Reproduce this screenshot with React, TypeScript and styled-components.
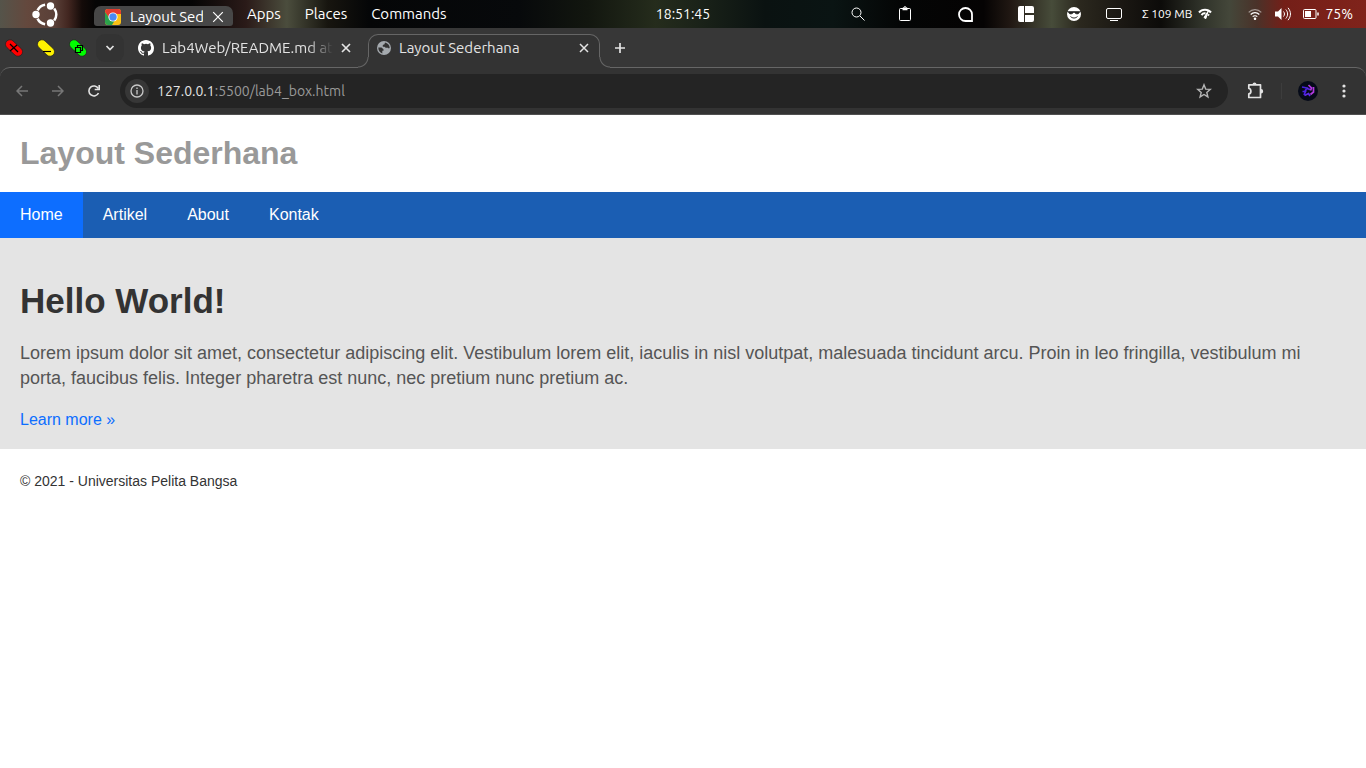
import React from 'react';
import styled, { createGlobalStyle } from 'styled-components';

const Global = createGlobalStyle`
  * { box-sizing: border-box; }
  body { margin: 0; background: #fff; font-family: "Liberation Sans", Arial, sans-serif; color: #333; }
  button { border: 0; padding: 0; background: none; color: inherit; font: inherit; display: flex; align-items: center; justify-content: center; cursor: pointer; }
  svg { display: block; flex: none; }
`;

const ui = '"Ubuntu", "Noto Sans", "Open Sans", sans-serif';

const Desktop = styled.header`
  display: grid;
  grid-template-columns: 1fr auto 1fr;
  align-items: center;
  height: 28px;
  color: #fff;
  font: 14px/20px ${ui};
  background: linear-gradient(90deg, #55544a 0%, #64483d 2%, #5a4038 4%, #422620 5%, #140b09 6%, #050505 7%, #050505 14%, #2a1a18 18%, #4b4d3d 21%, #17150f 24%, #050607 27%, #07090b 38%, #12160f 43%, #252c1c 48%, #1b2319 51%, #0a1211 56%, #0a1413 61%, #040505 66%, #050303 72%, #211813 74%, #474c3a 77%, #2b281e 79%, #1b1813 82%, #0c0b09 85%, #30332a 88%, #44473a 90%, #4a3229 92%, #741f18 94%, #80231b 100%);
`;
const DeskLeft = styled.div`
  display: flex;
  align-items: center;
  height: 28px;
  padding-left: 32px;
  font-size: 15px;
`;
const DeskButton = styled.button<{ $space: number }>`
  margin-left: ${p => p.$space}px;
`;
const TaskItem = styled.div`
  display: flex;
  align-items: center;
  align-self: flex-end;
  gap: 9px;
  width: 139px;
  height: 20px;
  margin: 0 14px 2px 35px;
  padding: 2px 9px 0 11px;
  border-radius: 7px 7px 3px 3px;
  background: #474747;
`;
const TaskName = styled.span`
  flex: 1;
  overflow: hidden;
  white-space: nowrap;
`;
const DeskMenu = styled.nav`
  display: flex;
  gap: 24px;
`;
const Status = styled.div`
  display: flex;
  align-items: center;
  justify-content: flex-end;
  padding-right: 13px;
`;
const Memory = styled.span`
  margin-left: 20px;
  font-size: 12px;
`;
const Percent = styled.span`
  margin-left: 6px;
`;

const Chrome = styled.section`
  background: #373737;
  color: #e3e3e3;
  font: 14px/20px ${ui};
`;
const TabStrip = styled.div`
  display: flex;
  height: 39px;
  font-size: 15px;
`;
const WindowButtons = styled.div`
  display: flex;
  align-items: center;
  gap: 12px;
  padding-left: 4px;
`;
const TabSearch = styled.button`
  align-self: center;
  width: 28px;
  height: 28px;
  margin-left: 8px;
  && { border-radius: 9px; background: #333; }
`;
const Tab = styled.div<{ $active?: boolean }>`
  position: relative;
  display: flex;
  align-items: center;
  gap: 8px;
  width: ${p => (p.$active ? 232 : 244)}px;
  height: ${p => (p.$active ? 34 : 28)}px;
  margin-top: 6px;
  padding: ${p => (p.$active ? '0 10px 7px 8px' : '0 17px 0 14px')};
  ${p => p.$active && `
    border: solid #666;
    border-width: 1px 1px 0;
    border-radius: 10px 10px 0 0;
    background: #333;
    &::before, &::after {
      content: '';
      position: absolute;
      bottom: 0;
      width: 11px;
      height: 11px;
    }
    &::before { left: -11px; background: radial-gradient(circle at 0 0, #373737 9px, #666 10px, #333 11px); }
    &::after { right: -11px; background: radial-gradient(circle at 100% 0, #373737 9px, #666 10px, #333 11px); }
  `}
`;
const TabTitle = styled.span<{ $fade?: boolean }>`
  flex: 1;
  overflow: hidden;
  white-space: nowrap;
  ${p => p.$fade && 'mask-image: linear-gradient(90deg, #000 85%, transparent);'}
`;
const NewTab = styled.button`
  align-self: center;
  width: 28px;
  height: 28px;
  margin-left: 6px;
`;
const Toolbar = styled.div`
  display: flex;
  align-items: center;
  height: 48px;
  padding: 0 14px 2px;
  border: solid #666;
  border-width: 1px 0 0;
  border-radius: 10px 10px 0 0;
  background: #333;
  box-shadow: inset 0 -1px #505050;
`;
const ToolButton = styled.button<{ $space?: number; $dim?: boolean }>`
  width: 16px;
  height: 28px;
  margin-left: ${p => p.$space || 0}px;
  && { color: ${p => (p.$dim ? '#777' : '#e3e3e3')}; }
`;
const AddressBar = styled.div`
  display: flex;
  align-items: center;
  flex: 1;
  height: 34px;
  margin-left: 18px;
  padding: 0 16px 0 5px;
  border-radius: 17px;
  background: #242424;
`;
const SiteInfo = styled.button`
  width: 24px;
  height: 24px;
  margin-right: 8px;
  && { border-radius: 12px; background: #373737; }
`;
const Address = styled.label`
  display: flex;
  flex: 1;
`;
const AddressInput = styled.input`
  flex: 1;
  min-width: 0;
  padding: 0;
  border: 0;
  outline: 0;
  background: none;
  color: #9a9a9a;
  font: inherit;
`;
const Divider = styled.span`
  width: 1px;
  height: 16px;
  margin: 0 16px 0 18px;
  background: #3d3d3d;
`;

const SiteHeader = styled.header`
  padding: 20px;
  h1 { margin: 0; font-size: 32px; line-height: 37px; color: #999; }
`;
const SiteNav = styled.nav`
  display: flex;
  background: #1b5eb3;
`;
const NavLink = styled.a<{ $active?: boolean }>`
  padding: 14px 20px;
  font-size: 16px;
  line-height: 18px;
  color: #fff;
  text-decoration: none;
  background: ${p => (p.$active ? '#0d6eff' : 'transparent')};
`;
const Hero = styled.section`
  padding: 43px 20px 20px;
  background: #e4e4e4;
  h1 { margin: 0 0 20px; font-size: 35px; line-height: 40px; }
  p { margin: 0 0 20px; font-size: 18px; line-height: 25px; color: #555; }
  a { display: inline-block; font-size: 16px; line-height: 18px; color: #0d6eff; text-decoration: none; vertical-align: top; }
`;
const SiteFooter = styled.footer`
  padding: 24px 20px;
  font-size: 14px;
  line-height: 16px;
`;

const line = { fill: 'none', stroke: 'currentColor' };

const UbuntuLogo = () => (
  <svg width="27" height="27" viewBox="0 0 27 27" fill="#fff">
    <path d="M22.200 7.500a9.800 9.800 0 0 1 0 12M5.600 9.400a9.800 9.800 0 0 1 7.500-5.600M5.600 17.600a9.800 9.800 0 0 0 7.500 5.600" fill="none" stroke="#fff" strokeWidth="2.600" />
    <circle cx="4" cy="13.500" r="3.700" /><circle cx="18.500" cy="5" r="3.700" /><circle cx="18.500" cy="22" r="3.700" />
  </svg>
);
const ChromeLogo = () => (
  <svg width="16" height="16" viewBox="0 0 16 16">
    <rect width="16" height="16" rx="3" fill="#fbc116" />
    <path d="M0 3a3 3 0 0 1 3-3h10a3 3 0 0 1 3 3v2H8L4.500 10 0 3z" fill="#e33b2e" />
    <path d="M0 3l5 7 5 1-3 5H3a3 3 0 0 1-3-3z" fill="#2ba24c" />
    <circle cx="8" cy="8" r="4.600" fill="#fff" /><circle cx="8" cy="8" r="3.700" fill="#4a8af4" />
  </svg>
);
const Cross = ({ size, stroke }: { size: number; stroke: number }) => (
  <svg width={size} height={size} viewBox="0 0 10 10" {...line} strokeWidth={stroke}><path d="M1 1l8 8M9 1L1 9" /></svg>
);
const Pill = ({ color, children }: { color: string; children: React.ReactNode }) => (
  <svg width="20" height="20" viewBox="0 0 20 20">
    <rect x="0" y="5.500" width="20" height="9" rx="4.500" fill={color} stroke="#222" strokeWidth=".7" transform="rotate(43 10 10)" />
    <g fill="none" stroke="#000" strokeWidth="1.200">{children}</g>
  </svg>
);
const GitHub = () => (
  <svg width="16" height="16" viewBox="0 0 16 16" fill="#fff">
    <path d="M8 0C3.580 0 0 3.580 0 8c0 3.540 2.290 6.530 5.470 7.590.4.070.55-.17.55-.38 0-.19-.01-.82-.01-1.490-2.010.37-2.530-.49-2.690-.94-.09-.23-.48-.94-.82-1.130-.28-.15-.68-.52-.01-.53.63-.01 1.080.58 1.230.82.72 1.210 1.870.87 2.330.66.07-.52.28-.87.51-1.070-1.780-.2-3.640-.89-3.640-3.950 0-.87.31-1.590.82-2.150-.08-.2-.36-1.020.08-2.120 0 0 .67-.21 2.200.82a7.600 7.600 0 0 1 4 0c1.530-1.040 2.200-.82 2.200-.82.44 1.100.16 1.920.08 2.120.51.56.82 1.270.82 2.150 0 3.070-1.870 3.750-3.650 3.950.29.25.54.73.54 1.480 0 1.070-.01 1.930-.01 2.200 0 .21.15.46.55.38A8 8 0 0 0 16 8c0-4.420-3.580-8-8-8z" />
  </svg>
);
const Globe = () => (
  <svg width="14" height="14" viewBox="0 0 14 14">
    <circle cx="7" cy="7" r="7" fill="#a4a9ae" />
    <path d="M1.300 6.500h3.200l2 1.700v1.600H5.300v2.700C2.800 11.600 1.200 9.300 1.300 6.500zM8 1.500c2.600.5 4.500 2.600 4.700 5-.4 1.300-1.200 1.400-1.600.3H8.700L7.500 5.700H5.800V4l1.700-.8z" fill="#333" />
  </svg>
);

export default function App() {
  return (
    <>
      <Global />
      <Desktop>
        <DeskLeft>
          <DeskButton $space={0} aria-label="Activities"><UbuntuLogo /></DeskButton>
          <TaskItem><ChromeLogo /><TaskName>Layout Sed</TaskName><button aria-label="Close window"><Cross size={12} stroke={1} /></button></TaskItem>
          <DeskMenu><button>Apps</button><button>Places</button><button>Commands</button></DeskMenu>
        </DeskLeft>
        <time>18:51:45</time>
        <Status>
          <DeskButton $space={0} aria-label="Search"><svg width="14" height="14" viewBox="0 0 14 14" {...line}><circle cx="5.500" cy="5.500" r="4.500" /><path d="M9 9l4.500 4.500" /></svg></DeskButton>
          <DeskButton $space={34} aria-label="Clipboard"><svg width="12" height="16" viewBox="0 0 12 16" {...line}><rect x=".5" y="2.500" width="11" height="12" rx="1" /><path d="M3.500 3h5" strokeWidth="2.500" /><circle cx="6" cy="2" r="1.300" /></svg></DeskButton>
          <DeskButton $space={47} aria-label="Messages"><svg width="15" height="15" viewBox="0 0 15 15" {...line} strokeWidth="1.800"><path d="M14 14H7.500A6.500 6.500 0 1 1 14 7.500z" /></svg></DeskButton>
          <DeskButton $space={45} aria-label="Tiling"><svg width="16" height="16" viewBox="0 0 16 16" fill="#fff"><path d="M2 0h4v16H2a2 2 0 0 1-2-2V2a2 2 0 0 1 2-2zM7 0h7a2 2 0 0 1 2 2v5H7zM7 9h9v5a2 2 0 0 1-2 2H7z" /></svg></DeskButton>
          <DeskButton $space={33} aria-label="Caffeine"><svg width="14" height="14" viewBox="0 0 14 14"><circle cx="7" cy="7" r="7" fill="#fff" /><path d="M0 4.500h14M1.500 5c.3 2.500 4 2.500 5 .3h1c1 2.200 4.700 2.200 5-.3z" fill="#222" stroke="#222" strokeWidth=".7" /><path d="M3.500 9.500c2 2 5 2 7 0" fill="none" stroke="#222" /></svg></DeskButton>
          <DeskButton $space={25} aria-label="Display"><svg width="16" height="14" viewBox="0 0 16 14" {...line}><rect x=".5" y="1.500" width="15" height="10" rx="1.500" /><path d="M4 13.500h8" /></svg></DeskButton>
          <Memory>Σ 109 MB</Memory>
          <DeskButton $space={6} aria-label="Network speed"><svg width="14" height="12" viewBox="0 0 14 12" fill="none" stroke="#fff"><path d="M1 4.500C4 .8 10 .8 13 4.500" strokeWidth="2" /><path d="M3.500 7.200c1.200-1.700 3-2 4-1.700M10 6.500l1 1" strokeWidth="2" /><path d="M10.500 2.500L6 9.500l1.800 1.200z" fill="#fff" /></svg></DeskButton>
          <DeskButton $space={36} aria-label="Wi-Fi"><svg width="14" height="12" viewBox="0 0 14 12" {...line} strokeWidth="1.200"><path d="M.7 4.300c3.500-3.700 9.100-3.700 12.600 0" opacity=".5" /><path d="M2.700 6.500c2.400-2.500 6.200-2.500 8.600 0M4.700 8.700c1.300-1.300 3.300-1.300 4.600 0" /><circle cx="7" cy="10.700" r=".7" fill="#fff" /></svg></DeskButton>
          <DeskButton $space={13} aria-label="Volume"><svg width="16" height="14" viewBox="0 0 16 14" {...line}><path d="M0 4.500h3L6.500 1v12L3 9.500H0z" fill="#fff" stroke="none" /><path d="M8.500 4.500c1.300 1.500 1.300 3.500 0 5M10.800 2.500c2.400 2.800 2.400 6.200 0 9M13 .8c3.300 4 3.300 8.400 0 12.400" /></svg></DeskButton>
          <DeskButton $space={12} aria-label="Battery"><svg width="16" height="12" viewBox="0 0 16 12" {...line}><rect x=".5" y="1.500" width="12.500" height="9" rx="1" /><path d="M2 3h6v6H2z" fill="#fff" stroke="none" /><path d="M15 4.500v3" strokeWidth="1.500" /></svg></DeskButton>
          <Percent>75%</Percent>
        </Status>
      </Desktop>

      <Chrome>
        <TabStrip>
          <WindowButtons>
            <button aria-label="Close"><Pill color="#f00"><path d="M6 6l8 8M13 7l-7 6" /></Pill></button>
            <button aria-label="Minimize"><Pill color="#fff200"><path d="M7 13.500h8" /></Pill></button>
            <button aria-label="Maximize"><Pill color="#0f0"><path d="M7.500 9.500h5v5h-5zM9.500 9.500v-2h5v5h-2" /></Pill></button>
          </WindowButtons>
          <TabSearch aria-label="Search tabs"><svg width="10" height="6" viewBox="0 0 10 6" {...line} strokeWidth="1.700"><path d="M1.500 1L5 4.500 8.500 1" /></svg></TabSearch>
          <Tab>
            <GitHub /><TabTitle $fade>Lab4Web/README.md at main</TabTitle>
            <button aria-label="Close tab"><Cross size={10} stroke={1.7} /></button>
          </Tab>
          <Tab $active>
            <Globe /><TabTitle>Layout Sederhana</TabTitle>
            <button aria-label="Close tab"><Cross size={10} stroke={1.5} /></button>
          </Tab>
          <NewTab aria-label="New tab"><svg width="10" height="10" viewBox="0 0 10 10" {...line} strokeWidth="1.700"><path d="M5 0v10M0 5h10" /></svg></NewTab>
        </TabStrip>
        <Toolbar>
          <ToolButton $dim aria-label="Back"><svg width="12" height="12" viewBox="0 0 12 12" {...line} strokeWidth="1.500"><path d="M12 6H1M6 1L1 6l5 5" /></svg></ToolButton>
          <ToolButton $dim $space={20} aria-label="Forward"><svg width="12" height="12" viewBox="0 0 12 12" {...line} strokeWidth="1.500"><path d="M0 6h11M6 1l5 5-5 5" /></svg></ToolButton>
          <ToolButton $space={20} aria-label="Reload"><svg width="12" height="12" viewBox="0 0 12 12" {...line} strokeWidth="1.600"><path d="M10.500 8A5 5 0 1 1 10.300 3.500" /><path d="M11.200 0v4.500H6.700" /></svg></ToolButton>
          <AddressBar>
            <SiteInfo aria-label="Site information"><svg width="14" height="14" viewBox="0 0 14 14" {...line} strokeWidth="1.300" opacity=".85"><circle cx="7" cy="7" r="6" /><path d="M7 6v4.500M7 3.500V5" /></svg></SiteInfo>
            <Address>127.0.0.1<AddressInput aria-label="Address" defaultValue=":5500/lab4_box.html" /></Address>
            <ToolButton aria-label="Bookmark"><svg width="16" height="16" viewBox="0 0 16 16" {...line} stroke="#b5b5b5" strokeWidth="1.400"><path d="M8 1.800l1.700 4.300 4.600.3-3.500 3 1.100 4.500L8 11.500l-3.900 2.400 1.100-4.500-3.500-3 4.600-.3z" /></svg></ToolButton>
          </AddressBar>
          <ToolButton $space={19} aria-label="Extensions"><svg width="17" height="17" viewBox="0 0 17 17"><path d="M1.800 2.800h11.700v12.700H1.800v-3.600c2.800-.4 2.800-5 0-5.400z" {...line} strokeWidth="1.700" strokeLinejoin="round" /><path d="M5.500 2.500a2 2 0 0 1 4 0zM14 7a2.200 2.200 0 0 1 0 4.400z" fill="currentColor" /></svg></ToolButton>
          <Divider />
          <button aria-label="Profile"><svg width="20" height="20" viewBox="0 0 20 20"><circle cx="10" cy="10" r="10" fill="#050a18" /><g fill="none" strokeWidth="1.700"><path d="M4 6l5 1-2 3M4.500 10.500h3L6 14" stroke="#4a22e0" /><path d="M6.500 14.500l4-2 1.500 2.500M9 7.500l3 1" stroke="#5f2ae8" /><path d="M10.500 4l3 3-1 2.500M15.500 6v5l-3 2.500" stroke="#b23ae0" /></g></svg></button>
          <ToolButton $space={18} aria-label="Menu"><svg width="4" height="14" viewBox="0 0 4 14" fill="currentColor"><circle cx="2" cy="2" r="1.600" /><circle cx="2" cy="7" r="1.600" /><circle cx="2" cy="12" r="1.600" /></svg></ToolButton>
        </Toolbar>
      </Chrome>

      <SiteHeader><h1>Layout Sederhana</h1></SiteHeader>
      <SiteNav>
        <NavLink href="#home" $active>Home</NavLink>
        <NavLink href="#artikel">Artikel</NavLink>
        <NavLink href="#about">About</NavLink>
        <NavLink href="#kontak">Kontak</NavLink>
      </SiteNav>
      <main>
        <Hero>
          <h1>Hello World!</h1>
          <p>Lorem ipsum dolor sit amet, consectetur adipiscing elit. Vestibulum lorem elit, iaculis in nisl volutpat, malesuada tincidunt arcu. Proin in leo fringilla, vestibulum mi porta, faucibus felis. Integer pharetra est nunc, nec pretium nunc pretium ac.</p>
          <a href="#more">Learn more »</a>
        </Hero>
      </main>
      <SiteFooter>© 2021 - Universitas Pelita Bangsa</SiteFooter>
    </>
  );
}
